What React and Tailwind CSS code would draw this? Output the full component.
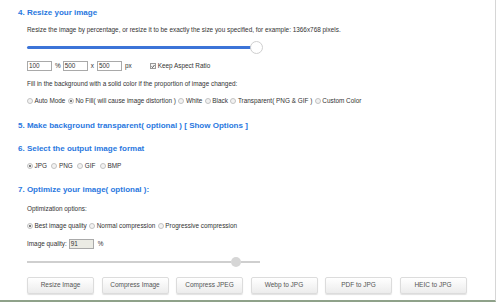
import React from 'react';

const font = { fontFamily: '"Liberation Sans", Arial, sans-serif' };

function Radio({ checked, label }) {
  return (
    <label className="flex items-center gap-[1.5px] mr-[2.5px]">
      <span className="w-[6px] h-[6px] rounded-full border border-[#c2c2c2] bg-[#f2f2f2] flex items-center justify-center">
        {checked && <span className="w-[2px] h-[2px] rounded-full bg-[#555]" />}
      </span>
      <span>{label}</span>
    </label>
  );
}

function Box({ value, w = 'w-[25px]', gray }) {
  return (
    <span className={`${w} h-[10px] border border-[#a9a9a9] px-[1px] flex items-center ${gray ? 'bg-[#ebebe4]' : 'bg-white'}`}>
      {value}
    </span>
  );
}

function Heading({ children, h }) {
  return <div className={`${h} flex items-center pl-[18px] text-[8px] font-bold text-[#2a78e0]`}>{children}</div>;
}

const buttons = ['Resize Image', 'Compress Image', 'Compress JPEG', 'Webp to JPG', 'PDF to JPG', 'HEIC to JPG'];

export default function App() {
  return (
    <div style={font} className="w-[496px] h-[302px] bg-white border-r border-[#d6d6d6] border-b-2 border-b-[#8fa28a] overflow-hidden text-[6.4px] text-[#333] leading-none">
      <div className="pt-[4px]">
        <Heading h="h-[18px]">4. Resize your image</Heading>
        <div className="h-[16px] flex items-center pl-[27px]">
          Resize the image by percentage, or resize it to be exactly the size you specified, for example: 1366x768 pixels.
        </div>
        <div className="h-[18px] flex items-center pl-[27px]">
          <div className="w-[224px] h-[3px] bg-[#3c74d8] rounded-l" />
          <div className="w-[13px] h-[13px] rounded-full border border-[#cfcfcf] bg-white -ml-[1px]" />
        </div>
        <div className="h-[20px] flex items-center pl-[27px]">
          <Box value="100" />
          <span className="ml-[3px] mr-[2px]">%</span>
          <Box value="500" />
          <span className="mx-[3px]">x</span>
          <Box value="500" />
          <span className="ml-[3px]">px</span>
          <span className="ml-[18px] w-[6px] h-[6px] border border-[#999] bg-[#f4f4f4] flex items-center justify-center">
            <svg viewBox="0 0 8 8" className="w-[5px] h-[5px]"><path d="M1 4 L3 6 L7 1" fill="none" stroke="#333" strokeWidth="1.6" /></svg>
          </span>
          <span className="ml-[2px]">Keep Aspect Ratio</span>
        </div>
        <div className="h-[16px] flex items-center pl-[27px]">
          Fill in the background with a solid color if the proportion of image changed:
        </div>
        <div className="h-[18px] flex items-center pl-[27px]">
          <Radio label="Auto Mode" />
          <Radio checked label="No Fill( will cause image distortion )" />
          <Radio label="White" />
          <Radio label="Black" />
          <Radio label="Transparent( PNG & GIF )" />
          <Radio label="Custom Color" />
        </div>
        <Heading h="h-[32px]">5. Make background transparent( optional ) [ Show Options ]</Heading>
        <Heading h="h-[14px]">6. Select the output image format</Heading>
        <div className="h-[20px] flex items-center pl-[27px] gap-[2px]">
          <Radio checked label="JPG" />
          <Radio label="PNG" />
          <Radio label="GIF" />
          <Radio label="BMP" />
        </div>
        <Heading h="h-[28px]">7. Optimize your image( optional ):</Heading>
        <div className="h-[10px] flex items-center pl-[27px]">Optimization options:</div>
        <div className="h-[24px] flex items-center pl-[27px]">
          <Radio checked label="Best image quality" />
          <Radio label="Normal compression" />
          <Radio label="Progressive compression" />
        </div>
        <div className="h-[12px] flex items-center pl-[27px]">
          <span className="mr-[2px]">Image quality:</span>
          <Box value="91" gray />
          <span className="ml-[4px]">%</span>
        </div>
        <div className="h-[24px] flex items-center pl-[27px]">
          <div className="w-[204px] h-[2px] bg-[#cfcfcf]" />
          <div className="w-[10px] h-[10px] rounded-full bg-[#d6d6d6]" />
          <div className="w-[19px] h-[2px] bg-[#cfcfcf]" />
        </div>
        <div className="mt-[3px] flex pl-[27px] gap-[7.5px]">
          {buttons.map(b => (
            <button key={b} className="w-[67px] h-[17px] rounded-[2px] border border-[#dcdcdc] bg-gradient-to-b from-white to-[#ececec] shadow-[0_1px_1px_rgba(0,0,0,0.12)] text-[#555] text-[6.5px]">
              {b}
            </button>
          ))}
        </div>
      </div>
    </div>
  );
}
